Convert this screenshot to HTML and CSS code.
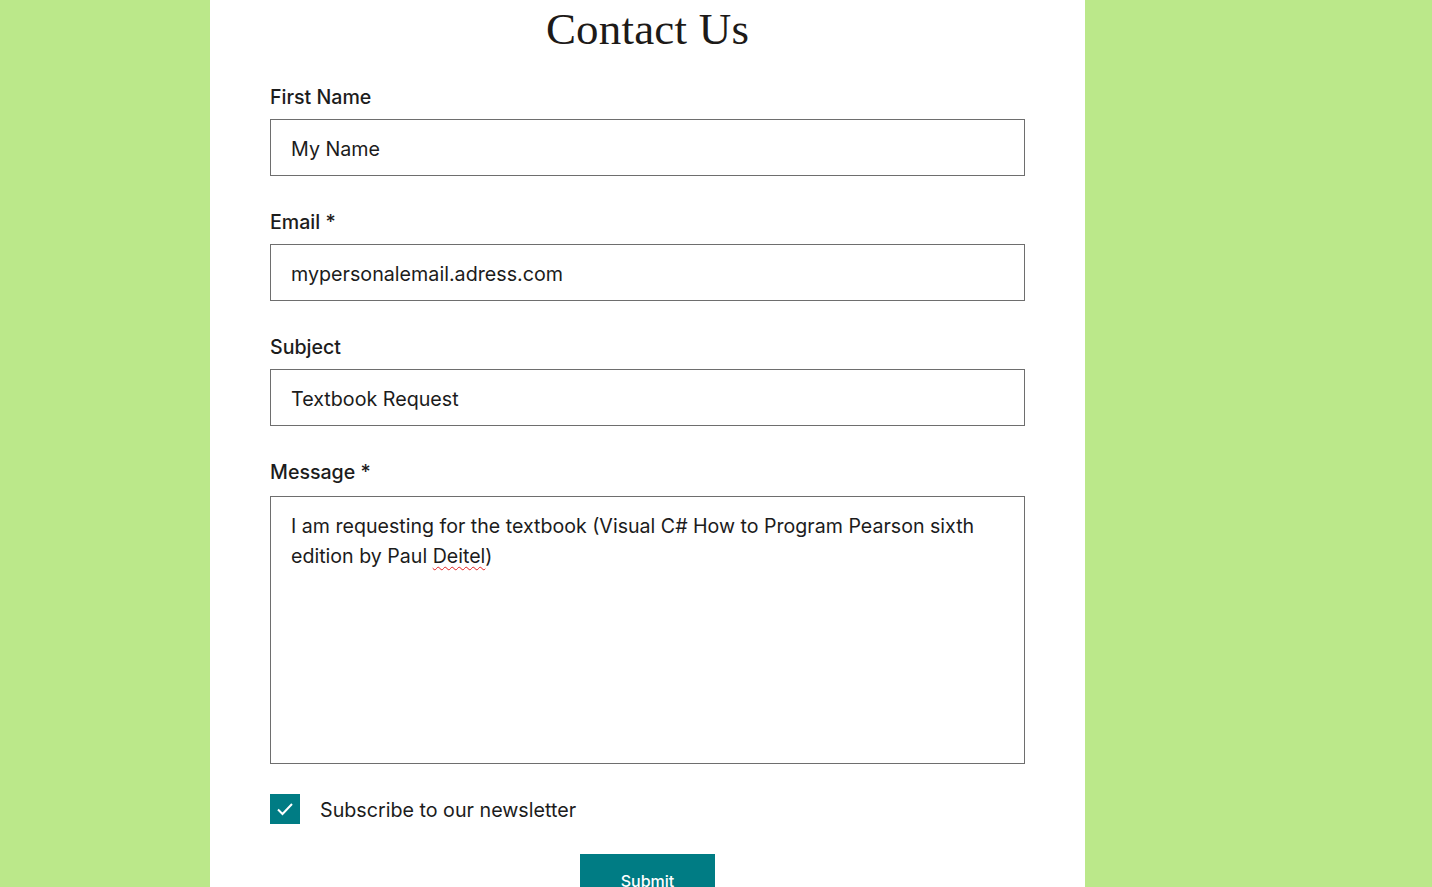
FILE: index.html
```html
<!DOCTYPE html>
<html lang="en">
<head>
<meta charset="utf-8">
<title>Contact Us</title>
<link rel="stylesheet" href="styles.css">
</head>
<body>
<main class="panel">
  <h1 class="title">Contact Us</h1>
  <form class="form">
    <div class="field">
      <label class="label" for="fname">First Name</label>
      <input class="input" id="fname" type="text" value="My Name">
    </div>
    <div class="field">
      <label class="label" for="email">Email *</label>
      <input class="input" id="email" type="text" value="mypersonalemail.adress.com">
    </div>
    <div class="field">
      <label class="label" for="subject">Subject</label>
      <input class="input" id="subject" type="text" value="Textbook Request">
    </div>
    <div class="field">
      <label class="label label-msg" for="message">Message *</label>
      <div class="textarea" id="message" role="textbox" aria-multiline="true">I am requesting for the textbook (Visual C# How to Program Pearson sixth edition by Paul <span class="spell">Deitel</span>)</div>
    </div>
    <label class="check">
      <span class="box">
        <svg width="18" height="14" viewBox="0 0 18 14"><path d="M2 7.5 L6.5 12 L16 2" fill="none" stroke="#fff" stroke-width="2"/></svg>
      </span>
      <span class="check-text">Subscribe to our newsletter</span>
    </label>
    <div class="actions">
      <button class="submit" type="button">Submit</button>
    </div>
  </form>
</main>
</body>
</html>
```

FILE: styles.css
```css
html, body {
  margin: 0;
  padding: 0;
}
body {
  background: #bbe88a;
  font-family: Inter, "Liberation Sans", sans-serif;
  color: #1c1c1c;
  height: 887px;
  overflow: hidden;
}
.panel {
  width: 875px;
  margin-left: 210px;
  background: #fff;
  min-height: 1000px;
  box-sizing: border-box;
  padding: 0 60px;
}
.title {
  margin: 0;
  padding-top: 3px;
  text-align: center;
  font-family: "Liberation Serif", serif;
  font-weight: 400;
  font-size: 45px;
  line-height: 52px;
  color: #1d1a18;
  letter-spacing: 0.2px;
}
.form {
  display: flex;
  flex-direction: column;
  padding-top: 30px;
}
.field {
  display: flex;
  flex-direction: column;
  margin-bottom: 34px;
}
.label {
  font-size: 19.6px;
  line-height: 24px;
  font-weight: 500;
  margin-bottom: 10px;
  color: #1c1c1c;
}
.label-msg {
  margin-bottom: 12px;
}
.input {
  height: 57px;
  box-sizing: border-box;
  border: 1px solid #6e6e6e;
  border-radius: 0;
  padding: 2px 20px 0 20px;
  font-family: Inter, "Liberation Sans", sans-serif;
  font-size: 19.7px;
  color: #1c1c1c;
  outline: none;
  background: #fff;
}
.textarea {
  height: 268px;
  box-sizing: border-box;
  border: 1px solid #6e6e6e;
  padding: 14px 20px 14px 20px;
  font-size: 19.6px;
  line-height: 30px;
  color: #1c1c1c;
}
.spell {
  text-decoration: underline wavy #e02020;
  text-decoration-thickness: 1px;
  text-underline-offset: 3px;
}
.check {
  display: flex;
  align-items: center;
  gap: 20px;
  margin-top: -4px;
}
.box {
  width: 30px;
  height: 30px;
  background: #007c84;
  display: flex;
  align-items: center;
  justify-content: center;
}
.check-text {
  font-size: 19.7px;
  line-height: 24px;
  padding-top: 2px;
  color: #1c1c1c;
}
.actions {
  display: flex;
  justify-content: center;
  margin-top: 30px;
}
.submit {
  width: 135px;
  padding: 17px 0 19px;
  line-height: 20px;
  background: #007c84;
  color: #fff;
  border: none;
  font-family: Inter, "Liberation Sans", sans-serif;
  font-size: 16px;
  font-weight: 500;
}
```
